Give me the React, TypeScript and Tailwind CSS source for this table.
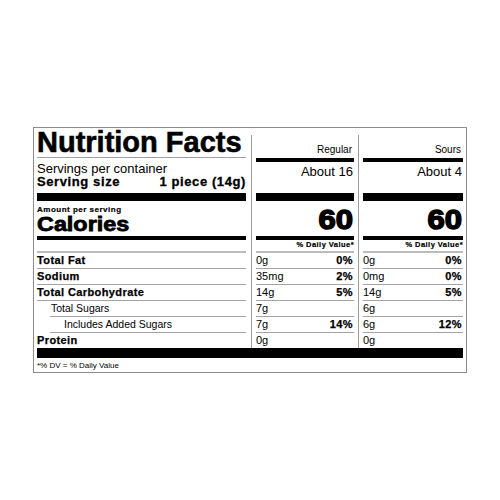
type Row = {
  label: string;
  kind: "bold" | "sub1" | "sub2";
  a: string;
  ap: string;
  b: string;
  bp: string;
};

const rows: Row[] = [
  { label: "Total Fat", kind: "bold", a: "0g", ap: "0%", b: "0g", bp: "0%" },
  { label: "Sodium", kind: "bold", a: "35mg", ap: "2%", b: "0mg", bp: "0%" },
  { label: "Total Carbohydrate", kind: "bold", a: "14g", ap: "5%", b: "14g", bp: "5%" },
  { label: "Total Sugars", kind: "sub1", a: "7g", ap: "", b: "6g", bp: "" },
  { label: "Includes Added Sugars", kind: "sub2", a: "7g", ap: "14%", b: "6g", bp: "12%" },
  { label: "Protein", kind: "bold", a: "0g", ap: "", b: "0g", bp: "" },
];

function Sep({ indent }: { indent?: boolean }) {
  return <div className={indent ? "h-px bg-[#a3a3a3] ml-[13px]" : "h-px bg-[#a3a3a3]"} />;
}

function LabelColumn() {
  return (
    <div className="w-[209px] flex flex-col">
      <div className="h-[65px] flex flex-col">
        <div className="h-[29px] text-[29px] leading-[29px] font-bold whitespace-nowrap [-webkit-text-stroke:0.6px_black]">
          Nutrition Facts
        </div>
        <div className="h-px bg-[#a0a0a0]" />
        <div className="mt-[4px] text-[13px] leading-[14px] whitespace-nowrap">Servings per container</div>
        <div className="flex justify-between text-[13px] leading-[12px] font-bold tracking-[0.6px] whitespace-nowrap [-webkit-text-stroke:0.3px_black]">
          <span>Serving size</span>
          <span>1 piece (14g)</span>
        </div>
      </div>
      <div className="h-[8px] bg-black" />
      <div className="h-[35px] flex flex-col">
        <div className="mt-[4px] text-[8px] leading-[9px] font-bold tracking-[0.5px] whitespace-nowrap [-webkit-text-stroke:0.2px_black]">
          Amount per serving
        </div>
        <div className="h-[20px] text-[20.5px] leading-[20px] font-bold whitespace-nowrap">
          <span className="inline-block origin-left scale-x-[1.14] [-webkit-text-stroke:0.8px_black]">Calories</span>
        </div>
      </div>
      <div className="h-[4px] bg-black" />
      <div className="h-[11px]" />
      <div className="h-[2px] bg-[#bcbcbc]" />
      <div className="flex flex-col">
        {rows.map((r, i) => (
          <div key={r.label}>
            <div
              className={
                r.kind === "bold"
                  ? "h-[15px] text-[11px] leading-[15px] font-bold tracking-[0.4px] whitespace-nowrap [-webkit-text-stroke:0.25px_black]"
                  : r.kind === "sub1"
                  ? "h-[15px] text-[10.5px] leading-[15px] pl-[14px] whitespace-nowrap"
                  : "h-[15px] text-[10.5px] leading-[15px] pl-[27px] whitespace-nowrap"
              }
            >
              {r.label}
            </div>
            {i < rows.length - 1 && <Sep indent={i === 3 || i === 4} />}
          </div>
        ))}
      </div>
    </div>
  );
}

function ValueColumn({
  width,
  title,
  servings,
  vals,
}: {
  width: string;
  title: string;
  servings: string;
  vals: { v: string; p: string }[];
}) {
  return (
    <div className={`${width} flex flex-col`}>
      <div className="h-[65px] flex flex-col">
        <div className="h-[30px] flex items-end justify-end pb-[2px] pr-[2px]">
          <span className="text-[10px] leading-[12px] whitespace-nowrap">{title}</span>
        </div>
        <div className="h-[4px] bg-black" />
        <div className="h-[31px] pt-[3px] pr-[1px] text-right text-[13px] leading-[14px] whitespace-nowrap">
          {servings}
        </div>
      </div>
      <div className="h-[8px] bg-black" />
      <div className="h-[35px] flex flex-col">
        <div className="mt-[5px] h-[28px] text-right text-[27px] leading-[28px] font-bold pr-[1px]">
          <span className="inline-block origin-right scale-x-[1.15] [-webkit-text-stroke:1.4px_black]">60</span>
        </div>
      </div>
      <div className="h-[4px] bg-black" />
      <div className="h-[11px] text-right text-[7.5px] leading-[9px] font-bold tracking-[0.45px] whitespace-nowrap [-webkit-text-stroke:0.2px_black]">
        % Daily Value*
      </div>
      <div className="h-[2px] bg-[#bcbcbc]" />
      <div className="flex flex-col">
        {vals.map((x, i) => (
          <div key={i}>
            <div className="h-[15px] flex justify-between items-center text-[11px] leading-[15px] whitespace-nowrap">
              <span>{x.v}</span>
              <span className="font-bold tracking-[0.4px] pr-[1px] [-webkit-text-stroke:0.25px_black]">{x.p}</span>
            </div>
            {i < vals.length - 1 && <Sep />}
          </div>
        ))}
      </div>
    </div>
  );
}

export default function App() {
  return (
    <div className="w-[500px] h-[500px] bg-white pt-[127px] pl-[33px] font-['Liberation_Sans',Arial,sans-serif] text-black">
      <div className="w-[434px] border border-[#8c8c8c] px-[3px] pb-[1px] flex flex-col">
        <div className="flex">
          <LabelColumn />
          <div className="w-[5px]" />
          <div className="w-px mt-[7px] bg-[#9c9c9c]" />
          <div className="w-[4px]" />
          <ValueColumn
            width="w-[98px]"
            title="Regular"
            servings="About 16"
            vals={rows.map((r) => ({ v: r.a, p: r.ap }))}
          />
          <div className="w-[4px]" />
          <div className="w-px mt-[7px] bg-[#9c9c9c]" />
          <div className="w-[4px]" />
          <ValueColumn
            width="w-[100px]"
            title="Sours"
            servings="About 4"
            vals={rows.map((r) => ({ v: r.b, p: r.bp }))}
          />
        </div>
        <div className="h-[10px] bg-black" />
        <div className="mt-[3px] text-[8px] leading-[10px] whitespace-nowrap">*% DV = % Daily Value</div>
      </div>
    </div>
  );
}
